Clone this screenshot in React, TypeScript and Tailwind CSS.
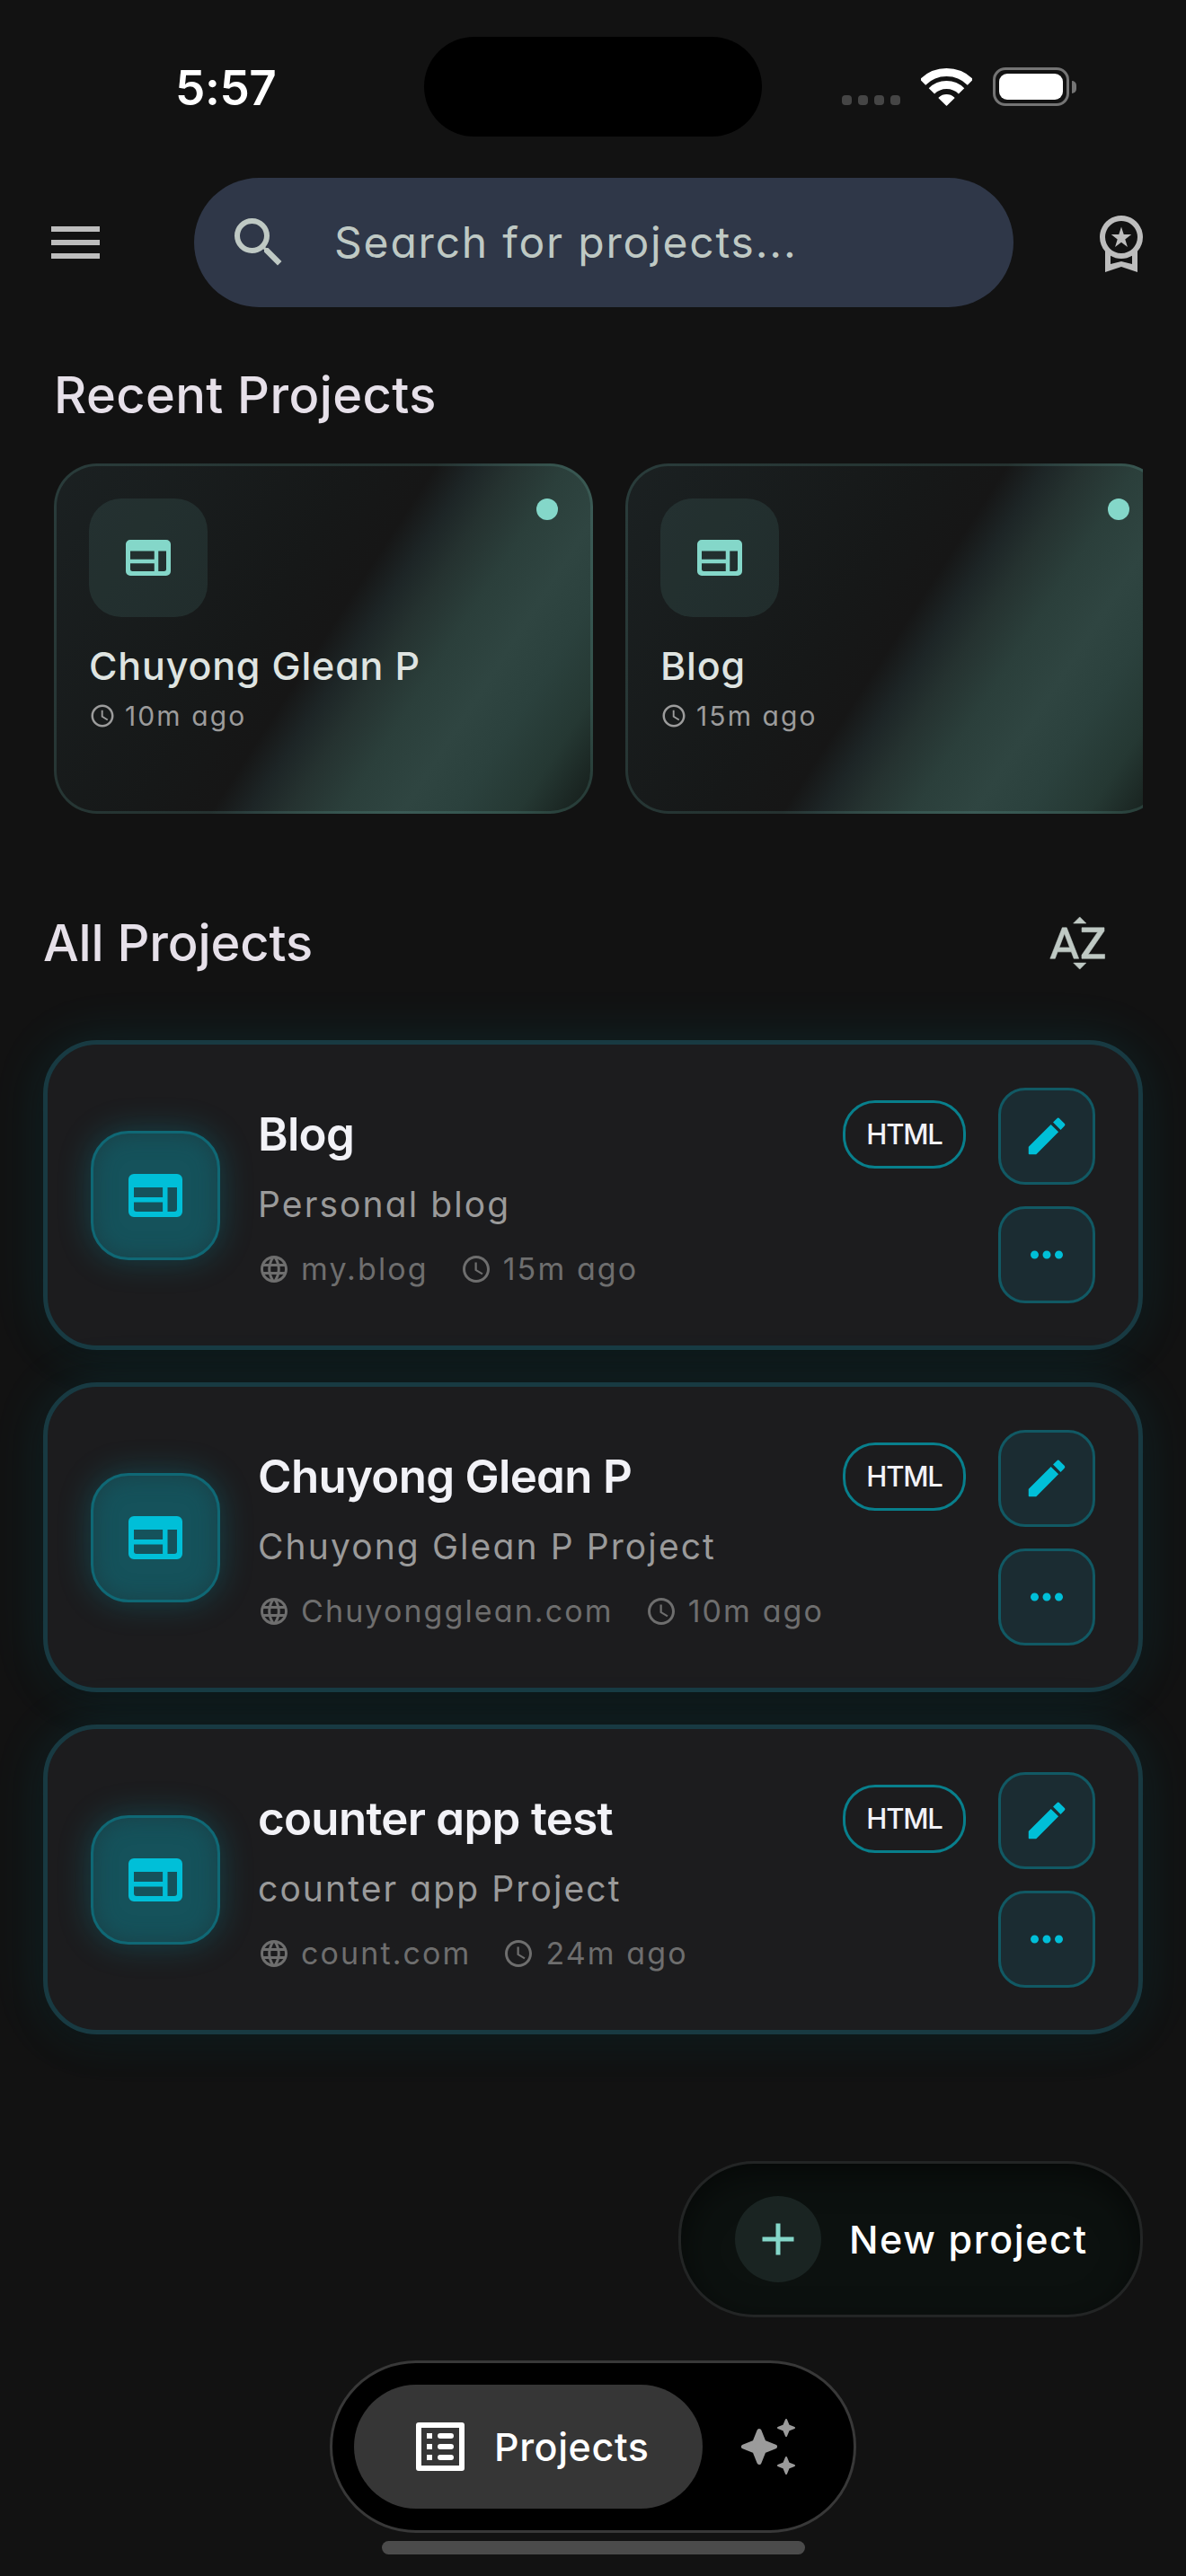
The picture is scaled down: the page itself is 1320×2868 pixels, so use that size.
import React from 'react';
import {
  MdAdd,
  MdLanguage,
  MdMenu,
  MdMoreHoriz,
  MdOutlineWorkspacePremium,
  MdSchedule,
  MdSearch,
  MdSortByAlpha,
} from 'react-icons/md';

type Project = {
  name: string;
  description: string;
  domain: string;
  updated: string;
};

const recentProjects = [
  { name: 'Chuyong Glean P', updated: '10m ago' },
  { name: 'Blog', updated: '15m ago' },
];

const projects: Project[] = [
  { name: 'Blog', description: 'Personal blog', domain: 'my.blog', updated: '15m ago' },
  { name: 'Chuyong Glean P', description: 'Chuyong Glean P Project', domain: 'Chuyongglean.com', updated: '10m ago' },
  { name: 'counter app test', description: 'counter app Project', domain: 'count.com', updated: '24m ago' },
];

const WebIcon: React.FC<{ className: string }> = ({ className }) => (
  <svg viewBox="0 0 24 24" fill="currentColor" fillRule="evenodd" className={className}>
    <path d="M4 4h16a2 2 0 0 1 2 2v12a2 2 0 0 1-2 2H4a2 2 0 0 1-2-2V6a2 2 0 0 1 2-2ZM4 9v3.7h10.7V9ZM4 14.5V17a1 1 0 0 0 1 1h9.7v-3.5ZM16.5 9v9H19a1 1 0 0 0 1-1V9Z" />
  </svg>
);

const EditIcon: React.FC = () => (
  <svg viewBox="0 0 24 24" fill="currentColor" className="size-[54px]">
    <path d="M3 17.46v3.04c0 .28.22.5.5.5h3.04c.13 0 .26-.05.35-.15L17.81 9.94l-3.75-3.75L3.15 17.1c-.1.1-.15.22-.15.36zM20.71 7.04a.996.996 0 0 0 0-1.41l-2.34-2.34a.996.996 0 0 0-1.41 0l-1.83 1.83 3.75 3.75 1.83-1.83z" />
  </svg>
);

const ListIcon: React.FC = () => (
  <svg viewBox="0 0 24 24" className="size-[72px]">
    <rect x="4" y="4" width="16" height="16" fill="none" stroke="currentColor" strokeWidth="2" strokeLinejoin="round" />
    <path d="M7 7h2v2H7zM7 11h2v2H7zM7 15h2v2H7z" fill="currentColor" />
    <path d="M12 8h4M12 12h4M12 16h4" stroke="currentColor" strokeWidth="2" strokeLinecap="round" />
  </svg>
);

const SparkleIcon: React.FC = () => (
  <svg viewBox="0 0 72 72" fill="currentColor" stroke="currentColor" strokeLinejoin="round" className="size-[72px]">
    <path strokeWidth="5" d="M26 18.5 31 31 43.5 36 31 41 26 53.5 21 41 8.5 36 21 31Z" />
    <path
      strokeWidth="2"
      d="M56 6 58.7 12.3 65 15 58.7 17.7 56 24 53.3 17.7 47 15 53.3 12.3ZM56 48 58.7 54.3 65 57 58.7 59.7 56 66 53.3 59.7 47 57 53.3 54.3Z"
    />
  </svg>
);

const StatusBar: React.FC = () => (
  <div className="flex h-[193px] items-center">
    <div className="w-[472px] pt-[3px] pl-[195px] text-[53px] leading-[60px] font-semibold tracking-[-0.4px] text-white">
      5:57
    </div>
    <div className="h-[111px] w-[376px] rounded-full bg-black" />
    <div className="flex items-center pl-[89px]">
      <div className="mt-[30px] flex gap-[7px]">
        {[0, 1, 2, 3].map((dot) => (
          <span key={dot} className="h-[11px] w-[11px] rounded-[4px] bg-[#454545]" />
        ))}
      </div>
      <svg viewBox="0 0 57 42" fill="none" stroke="#fff" strokeWidth="9" className="ml-[23px] h-[42px] w-[57px]">
        <path d="M2 15.5a37.5 37.5 0 0 1 53 0" />
        <path d="M11.9 25.4a23.5 23.5 0 0 1 33.2 0" />
        <path d="M28.5 41 20.3 33a12 12 0 0 1 16.4 0Z" fill="#fff" strokeWidth="1.5" strokeLinejoin="round" />
      </svg>
      <div className="ml-[23px] h-[43px] w-[85px] rounded-[14px] border-[3px] border-[#747474] p-1">
        <div className="h-full w-full rounded-[9px] bg-white" />
      </div>
      <div className="ml-[3px] h-[14px] w-[5px] rounded-r-full bg-[#747474]" />
    </div>
  </div>
);

const RecentCard: React.FC<{ name: string; updated: string }> = ({ name, updated }) => (
  <div className="relative h-[390px] w-[600px] shrink-0 rounded-[48px] border-[3px] border-[#80d8cb]/15 bg-[linear-gradient(123deg,#1b2122_0%,#161818_40%,#161616_50%,#1d2526_55%,#253230_60%,#2b3f3b_67%,#2f4541_75%,#2b413d_82%,#253833_90%,#17201d_98%)] bg-origin-border p-9">
    <div className="flex size-[132px] items-center justify-center rounded-[36px] bg-[#80d8cb]/10">
      <WebIcon className="size-[60px] text-[#84d7c9]" />
    </div>
    <h3 className="mt-[27px] text-[43px] leading-[54px] font-medium tracking-[0.8px] text-[#dfe4e1]">{name}</h3>
    <div className="mt-[11px] flex h-9 items-center gap-2.5 text-[#9c9c9c]">
      <MdSchedule className="size-[30px]" />
      <span className="text-[30px] leading-9 tracking-[2.1px]">{updated}</span>
    </div>
    <span className="absolute top-9 right-9 size-6 rounded-full bg-[#84d7c9]" />
  </div>
);

const ProjectCard: React.FC<{ project: Project }> = ({ project }) => (
  <div className="flex h-[345px] items-center rounded-[60px] border-[5px] border-[#183a42] bg-[#1c1c1e] px-12 shadow-[0_12px_36px_rgba(0,0,0,0.2),0_0_60px_rgba(0,188,212,0.12)]">
    <div className="flex size-[144px] shrink-0 items-center justify-center rounded-[42px] border-[3px] border-[#0f6875] bg-[#15525b] text-[#00bfd8] shadow-[0_0_36px_rgba(0,188,212,0.25),inset_0_0_24px_rgba(28,60,66,0.8)]">
      <WebIcon className="size-[72px]" />
    </div>
    <div className="ml-[42px] flex-1">
      <div className="flex h-[66px] items-center justify-between">
        <h3 className="text-[51px] leading-[66px] font-semibold tracking-[-0.7px] text-[#f2f2f7]">{project.name}</h3>
        <span className="flex h-[76px] w-[137px] shrink-0 items-center justify-center rounded-[36px] border-[3px] border-[#087f8c] text-[31px] font-medium tracking-[-1.2px] text-[#f2f2f7]">
          HTML
        </span>
      </div>
      <p className="mt-[18px] text-[39px] leading-[54px] tracking-[2.1px] text-[#9a9a9a]">{project.description}</p>
      <div className="mt-[27px] flex h-9 items-center text-[34px] leading-9 tracking-[2.1px] text-[#6e6e6e]">
        <MdLanguage className="size-9" />
        <span className="ml-3">{project.domain}</span>
        <MdSchedule className="ml-[35px] size-9" />
        <span className="ml-3">{project.updated}</span>
      </div>
    </div>
    <div className="ml-9 flex flex-col gap-6 text-[#00bfd8]">
      <button type="button" className="flex size-[108px] items-center justify-center rounded-[30px] border-[3px] border-[#115964] bg-[#1b2c32]">
        <EditIcon />
      </button>
      <button type="button" className="flex size-[108px] items-center justify-center rounded-[30px] border-[3px] border-[#115964] bg-[#1b2c32]">
        <MdMoreHoriz className="size-[54px]" />
      </button>
    </div>
  </div>
);

const App: React.FC = () => {
  return (
    <div className="flex h-[2868px] w-[1320px] flex-col overflow-hidden bg-[#121212] font-['Inter',sans-serif] [font-feature-settings:'cv11']">
      <StatusBar />

      <header className="mt-[5px] flex items-center pl-12 text-[#bdbdbd]">
        <MdMenu className="size-[72px]" />
        <div className="ml-24 flex h-36 w-[912px] items-center rounded-full bg-[#2f3748] pl-9 text-[#bfc9c4]">
          <MdSearch className="size-[72px]" />
          <span className="ml-12 text-[48px] leading-[60px] tracking-[1.8px]">Search for projects...</span>
        </div>
        <MdOutlineWorkspacePremium className="ml-[84px] size-[72px]" />
      </header>

      <section className="mt-[68px]">
        <h2 className="ml-[60px] text-[56px] leading-[60px] font-medium tracking-[0.4px] text-[#e6e0e9]">Recent Projects</h2>
        <div className="mt-[46px] mr-12 ml-[60px] flex gap-9 overflow-hidden">
          {recentProjects.map((project) => (
            <RecentCard key={project.name} {...project} />
          ))}
        </div>
      </section>

      <section className="mt-[108px] px-12">
        <div className="flex h-[72px] items-center justify-between pr-9">
          <h2 className="text-[56px] leading-[60px] font-medium tracking-[-0.1px] text-[#e6e0e9]">All Projects</h2>
          <MdSortByAlpha className="size-[72px] text-[#bfc9c4] [stroke-linejoin:round] [&>path]:[stroke-width:0.2] [&>path[fill=none]]:stroke-none" />
        </div>
        <div className="mt-[72px] flex flex-col gap-9">
          {projects.map((project) => (
            <ProjectCard key={project.name} project={project} />
          ))}
        </div>
      </section>

      <button
        type="button"
        className="mt-[141px] mr-12 flex h-[174px] w-[517px] shrink-0 items-center self-end rounded-[84px] border-[3px] border-[#232525] bg-[#0c110f] pl-[60px] shadow-[inset_0_12px_36px_rgba(0,0,0,0.5)]"
      >
        <span className="flex size-24 items-center justify-center rounded-full bg-[#1a2422]">
          <MdAdd className="size-[60px] text-[#84d7c9]" />
        </span>
        <span className="ml-[31px] text-[43px] font-medium tracking-[1.6px] text-white">New project</span>
      </button>

      <nav className="mt-12 flex h-48 w-[586px] shrink-0 items-center self-center rounded-full border-[3px] border-[#383838] bg-black pl-6">
        <div className="flex h-[138px] w-[388px] items-center rounded-full bg-[#363636] pl-[60px] text-white">
          <ListIcon />
          <span className="ml-6 text-[43px] font-medium tracking-[0.6px]">Projects</span>
        </div>
        <span className="ml-[37px] text-[#9b9b9b]">
          <SparkleIcon />
        </span>
      </nav>

      <div className="mt-[9px] h-[15px] w-[471px] shrink-0 self-center rounded-full bg-[#4b4b4b]" />
    </div>
  );
};

export default App;
